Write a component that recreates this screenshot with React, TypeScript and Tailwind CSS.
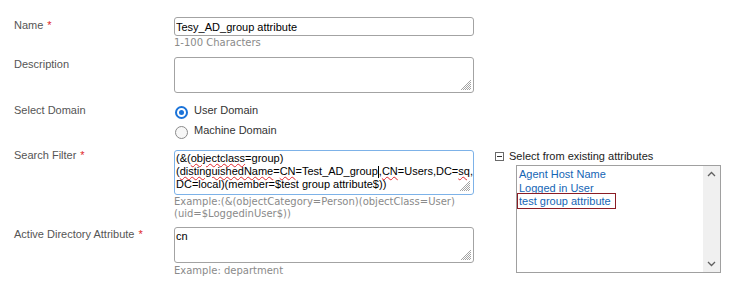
import { FC } from "react";

const labelFont = { fontFamily: '"Liberation Sans", Arial, sans-serif' };
const hintFont = { fontFamily: '"DejaVu Sans", Verdana, sans-serif' };

const Grip: FC = () => (
  <svg className="absolute right-[2px] bottom-[2px]" width="12" height="12" viewBox="0 0 12 12">
    <path d="M11 3 L3 11 M11 5 L5 11 M11 7 L7 11 M11 9 L9 11 M11 1 L1 11" stroke="#9a9a9a" strokeWidth="0.9" />
  </svg>
);

const Req: FC = () => <span className="text-[#e0262b] ml-[4px]">*</span>;

const Label: FC<{ text: string; required?: boolean }> = ({ text, required }) => (
  <div className="text-[11px] leading-[14px] text-[#555]" style={labelFont}>
    {text}
    {required && <Req />}
  </div>
);

const Hint: FC<{ children: React.ReactNode }> = ({ children }) => (
  <div className="text-[10px] leading-[12px] text-[#8a8a8a] mt-[1px] whitespace-nowrap" style={hintFont}>
    {children}
  </div>
);

const Wavy: FC<{ children: React.ReactNode }> = ({ children }) => (
  <span className="underline decoration-wavy decoration-[#e0262b] decoration-1 underline-offset-[1px]">{children}</span>
);

export default function App() {
  return (
    <div className="w-[730px] h-[293px] bg-white pt-[17px] pl-[14px] overflow-hidden">
      <div className="grid grid-cols-[160px_300px_1fr]">
        {/* Name */}
        <div className="pt-[1px]">
          <Label text="Name" required />
        </div>
        <div>
          <input
            defaultValue="Tesy_AD_group attribute"
            className="block w-full h-[19px] border border-[#a3a3a3] rounded-[3px] px-[1px] text-[11px] text-black outline-none"
            style={labelFont}
          />
          <Hint>1-100 Characters</Hint>
        </div>
        <div />

        {/* Description */}
        <div className="mt-[8px]">
          <Label text="Description" />
        </div>
        <div className="mt-[8px] relative h-[36px]">
          <textarea className="w-full h-full border border-[#a3a3a3] rounded-[3px] resize-none outline-none block" />
          <Grip />
        </div>
        <div />

        {/* Select Domain */}
        <div className="mt-[10px]">
          <Label text="Select Domain" />
        </div>
        <div className="mt-[7px] text-[11px] text-[#333]" style={labelFont}>
          <div className="flex items-center h-[20px]">
            <span className="w-[13px] h-[13px] rounded-full border-2 border-[#1a73d9] flex items-center justify-center ml-[1px] mt-[4px]">
              <span className="w-[5px] h-[5px] rounded-full bg-[#1a73d9]" />
            </span>
            <span className="ml-[6px]">User Domain</span>
          </div>
          <div className="flex items-center h-[20px]">
            <span className="w-[13px] h-[13px] rounded-full border-[1.5px] border-[#8a8a8a] bg-[#f7f7f7] ml-[1px] mt-[4px]" />
            <span className="ml-[6px]">Machine Domain</span>
          </div>
        </div>
        <div />

        {/* Search Filter */}
        <div className="mt-[8px]">
          <Label text="Search Filter" required />
        </div>
        <div className="mt-[10px]">
          <div
            role="textbox"
            className="relative h-[45px] border border-[#7db2e8] rounded-[3px] px-[1px] pt-[1px] text-[11px] leading-[13px] text-black"
            style={labelFont}
          >
            <div>
              (&amp;(<Wavy>objectclass</Wavy>=group)
            </div>
            <div className="whitespace-nowrap">
              (<Wavy>distinguishedName</Wavy>=<Wavy>CN</Wavy>=Test_AD_group
              <span className="inline-block w-px h-[12px] bg-black align-middle" />
              ,<Wavy>CN</Wavy>=Users,DC=<Wavy>sq</Wavy>,
            </div>
            <div>DC=local)(member=$test group attribute$))</div>
            <Grip />
          </div>
          <Hint>
            Example:(&amp;(objectCategory=Person)(objectClass=User)
            <br />
            (uid=$LoggedinUser$))
          </Hint>
        </div>
        <div className="row-span-2 mt-[10px] pl-[21px]" style={labelFont}>
          <div className="flex items-center h-[12px]">
            <span className="w-[9px] h-[9px] border border-[#6a6a6a] flex items-center justify-center">
              <span className="w-[5px] h-px bg-[#333]" />
            </span>
            <span className="ml-[5px] text-[11px] text-[#222]">Select from existing attributes</span>
          </div>
          <div className="ml-[21px] mt-[3px] w-[205px] h-[108px] border border-[#a0a0a0] flex">
            <div className="flex-1 pt-[1px] text-[11px] leading-[14px] text-[#1565b5]">
              <div className="pl-[2px] h-[14px]">Agent Host Name</div>
              <div className="pl-[2px] h-[12px]">Logged in User</div>
              <div className="inline-block border border-[#8b1c24] pl-[1px] pr-[4px] leading-[14px]">test group attribute</div>
            </div>
            <div className="w-[17px] bg-[#f0f0f0] flex flex-col justify-between items-center py-[5px]">
              <svg width="9" height="6" viewBox="0 0 9 6">
                <path d="M1 5 L4.5 1.5 L8 5" fill="none" stroke="#606060" strokeWidth="1.3" />
              </svg>
              <svg width="9" height="6" viewBox="0 0 9 6">
                <path d="M1 1 L4.5 4.5 L8 1" fill="none" stroke="#606060" strokeWidth="1.3" />
              </svg>
            </div>
          </div>
        </div>

        {/* Active Directory Attribute */}
        <div className="mt-[7px]">
          <Label text="Active Directory Attribute" required />
        </div>
        <div className="mt-[7px]">
          <div className="relative h-[36px]">
            <textarea
              defaultValue="cn"
              className="w-full h-full border border-[#a3a3a3] rounded-[3px] resize-none outline-none block px-[1px] pt-[1px] text-[11px] leading-[14px] text-black"
              style={labelFont}
            />
            <Grip />
          </div>
          <Hint>
            <span className="block mt-[2px]">Example: department</span>
          </Hint>
        </div>
      </div>
    </div>
  );
}
